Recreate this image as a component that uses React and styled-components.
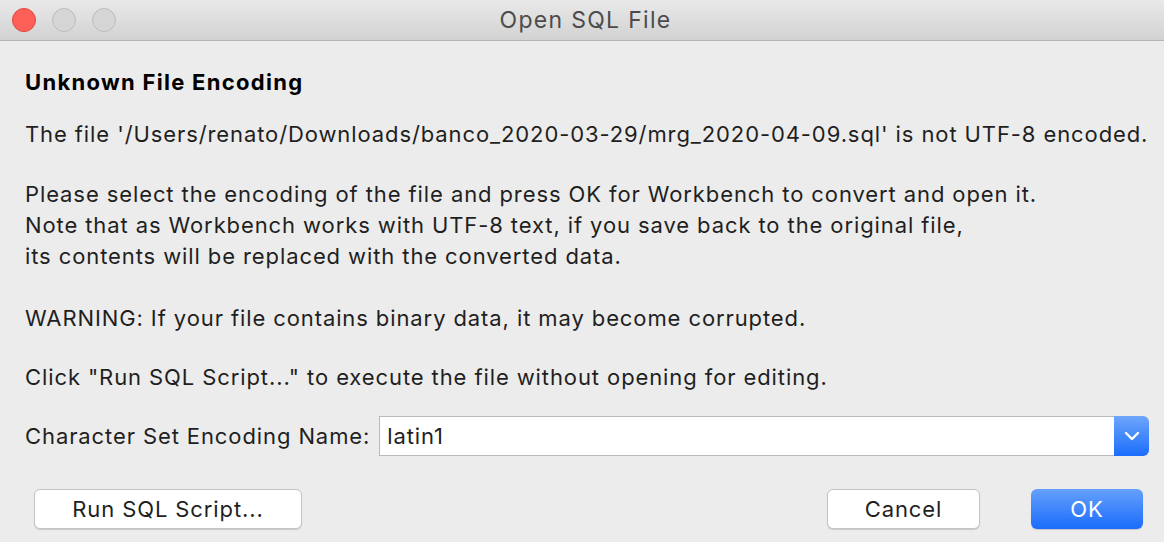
import React from "react";
import styled, { createGlobalStyle } from "styled-components";

const GlobalStyle = createGlobalStyle`
  html, body {
    margin: 0;
    padding: 0;
    background: #ececec;
  }
  body {
    font-family: Inter, "Noto Sans", "Liberation Sans", sans-serif;
    -webkit-font-smoothing: antialiased;
  }
`;

const Window = styled.div`
  width: 1164px;
  height: 542px;
  background: #ececec;
  display: flex;
  flex-direction: column;
  overflow: hidden;
`;

const TitleBar = styled.div`
  height: 41px;
  flex: none;
  display: flex;
  align-items: center;
  position: relative;
  background: linear-gradient(#e9e9e9, #d2d2d2);
  border-bottom: 1px solid #b5b5b5;
  box-sizing: border-box;
`;

const Lights = styled.div`
  display: flex;
  gap: 16px;
  padding-left: 12px;
  margin-top: -1px;
`;

const Light = styled.span`
  width: 24px;
  height: 24px;
  border-radius: 50%;
  box-sizing: border-box;
  background: ${(p) => (p.$red ? "#fe5f57" : "#d5d5d5")};
  border: 1px solid ${(p) => (p.$red ? "#e0443e" : "#bdbdbd")};
`;

const Title = styled.div`
  position: absolute;
  left: 7px;
  right: 0;
  text-align: center;
  font-size: 23px;
  letter-spacing: 1.3px;
  color: #4c4c4c;
  pointer-events: none;
`;

const Body = styled.div`
  flex: 1;
  padding: 26px 15px 0 25px;
  display: flex;
  flex-direction: column;
  color: #1f1f1f;
  font-size: 22px;
  letter-spacing: 0.9px;
  line-height: 31px;
`;

const Heading = styled.div`
  font-weight: 700;
  letter-spacing: 1.3px;
  color: #000;
  margin-bottom: 21px;
`;

const Para = styled.div`
  margin-bottom: ${(p) => p.$gap ?? 29}px;
  white-space: nowrap;
`;

const FieldRow = styled.div`
  display: flex;
  align-items: center;
  margin-top: -6px;
  gap: 9px;
`;

const Label = styled.span`
  white-space: nowrap;
`;

const Select = styled.div`
  display: flex;
  width: 770px;
  height: 40px;
`;

const Input = styled.div`
  flex: 1;
  background: #fff;
  border: 1px solid #b9b9b9;
  border-right: none;
  box-sizing: border-box;
  padding-left: 7px;
  display: flex;
  align-items: center;
`;

const Arrow = styled.div`
  width: 35px;
  border-radius: 0 6px 6px 0;
  background: linear-gradient(#6ea6fb, #1a6dfb);
  display: flex;
  align-items: center;
  justify-content: center;
`;

const Buttons = styled.div`
  display: flex;
  align-items: center;
  margin-top: 33px;
  padding: 0 21px 13px 34px;
`;

const Button = styled.button`
  height: 40px;
  width: ${(p) => p.$w}px;
  margin-left: ${(p) => p.$ml || 0}px;
  border-radius: 6px;
  font-family: inherit;
  font-size: 22px;
  letter-spacing: 0.9px;
  cursor: default;
  box-sizing: border-box;
  color: ${(p) => (p.$primary ? "#fff" : "#1f1f1f")};
  background: ${(p) =>
    p.$primary ? "linear-gradient(#66a0fb, #1a6cfb)" : "#fff"};
  border: ${(p) => (p.$primary ? "none" : "1px solid #c4c4c4")};
  box-shadow: 0 1px 1px rgba(0, 0, 0, 0.15);
`;

const Spacer = styled.div`
  flex: 1;
`;

export default function App() {
  return (
    <>
      <GlobalStyle />
      <Window>
        <TitleBar>
          <Lights>
            <Light $red />
            <Light />
            <Light />
          </Lights>
          <Title>Open SQL File</Title>
        </TitleBar>
        <Body>
          <Heading>Unknown File Encoding</Heading>
          <Para>
            The file '/Users/renato/Downloads/banco_2020-03-29/mrg_2020-04-09.sql' is not UTF-8 encoded.
          </Para>
          <Para $gap={31}>
            Please select the encoding of the file and press OK for Workbench to convert and open it.
            <br />
            Note that as Workbench works with UTF-8 text, if you save back to the original file,
            <br />
            its contents will be replaced with the converted data.
          </Para>
          <Para $gap={28}>
            WARNING: If your file contains binary data, it may become corrupted.
          </Para>
          <Para>Click "Run SQL Script..." to execute the file without opening for editing.</Para>
          <FieldRow>
            <Label>Character Set Encoding Name:</Label>
            <Select>
              <Input>latin1</Input>
              <Arrow>
                <svg width="16" height="10" viewBox="0 0 16 10">
                  <path
                    d="M2 2 L8 8 L14 2"
                    stroke="#fff"
                    strokeWidth="2.4"
                    fill="none"
                    strokeLinecap="round"
                    strokeLinejoin="round"
                  />
                </svg>
              </Arrow>
            </Select>
          </FieldRow>
        </Body>
        <Buttons>
          <Button $w={268}>Run SQL Script...</Button>
          <Spacer />
          <Button $w={153}>Cancel</Button>
          <Button $primary $w={112} $ml={51}>
            OK
          </Button>
        </Buttons>
      </Window>
    </>
  );
}
